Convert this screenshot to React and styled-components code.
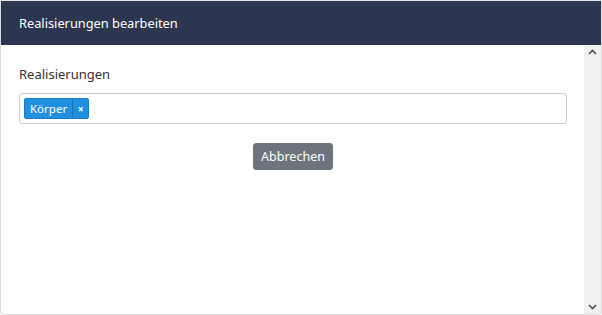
import React from 'react';
import styled, { createGlobalStyle } from 'styled-components';

const GlobalStyle = createGlobalStyle`
  html, body {
    margin: 0;
    padding: 0;
    background: #ffffff;
    font-family: "Noto Sans", "Open Sans", Arial, sans-serif;
  }
`;

const Modal = styled.div`
  box-sizing: border-box;
  width: 602px;
  height: 315px;
  border: 1px solid #dcdcdc;
  border-top-color: #e6e6e6;
  border-radius: 0 0 4px 4px;
  display: flex;
  flex-direction: column;
  overflow: hidden;
`;

const Header = styled.div`
  height: 43px;
  flex-shrink: 0;
  background: #2d3651;
  color: #ffffff;
  font-size: 12.8px;
  display: flex;
  align-items: center;
  padding-left: 18px;
  padding-bottom: 1px;
`;

const Body = styled.div`
  flex: 1;
  display: flex;
  min-height: 0;
`;

const Content = styled.div`
  flex: 1;
  padding: 19px 17px 0 18px;
  display: flex;
  flex-direction: column;
`;

const Label = styled.div`
  font-size: 13px;
  color: #333333;
  line-height: 20px;
  margin-bottom: 9px;
`;

const TagInput = styled.div`
  box-sizing: border-box;
  height: 31px;
  border: 1px solid #cccccc;
  border-radius: 3px;
  display: flex;
  align-items: center;
  padding-left: 4px;
`;

const Tag = styled.div`
  display: flex;
  height: 21px;
  background: #1f8fe0;
  border: 1px solid #1a7dc6;
  border-radius: 2px;
  box-sizing: border-box;
  color: #ffffff;
  font-size: 11.5px;
`;

const TagLabel = styled.span`
  padding: 0 5px 0 5px;
  display: flex;
  align-items: center;
`;

const TagRemove = styled.span`
  width: 15px;
  border-left: 1px solid #1a72b5;
  display: flex;
  align-items: center;
  justify-content: center;
  font-size: 10px;
  font-weight: bold;
`;

const Actions = styled.div`
  display: flex;
  justify-content: center;
  margin-top: 19px;
`;

const Button = styled.button`
  background: #6c757d;
  border: 1px solid #6c757d;
  color: #ffffff;
  border-radius: 3px;
  height: 27px;
  padding: 0 7px;
  font-family: inherit;
  font-size: 12.5px;
  cursor: pointer;
`;

const Scrollbar = styled.div`
  width: 17px;
  background: #f0f0f0;
  display: flex;
  flex-direction: column;
  justify-content: space-between;
  align-items: center;
  padding: 4px 0;
`;

const Arrow = ({ dir }) => (
  <svg width="9" height="6" viewBox="0 0 9 6">
    <path
      d={dir === 'up' ? 'M1 5 L4.5 1.5 L8 5' : 'M1 1 L4.5 4.5 L8 1'}
      fill="none"
      stroke="#505050"
      strokeWidth="1.6"
    />
  </svg>
);

const App = () => (
  <>
    <GlobalStyle />
    <Modal>
      <Header>Realisierungen bearbeiten</Header>
      <Body>
        <Content>
          <Label>Realisierungen</Label>
          <TagInput>
            <Tag>
              <TagLabel>Körper</TagLabel>
              <TagRemove>×</TagRemove>
            </Tag>
          </TagInput>
          <Actions>
            <Button>Abbrechen</Button>
          </Actions>
        </Content>
        <Scrollbar>
          <Arrow dir="up" />
          <Arrow dir="down" />
        </Scrollbar>
      </Body>
    </Modal>
  </>
);

export default App;
